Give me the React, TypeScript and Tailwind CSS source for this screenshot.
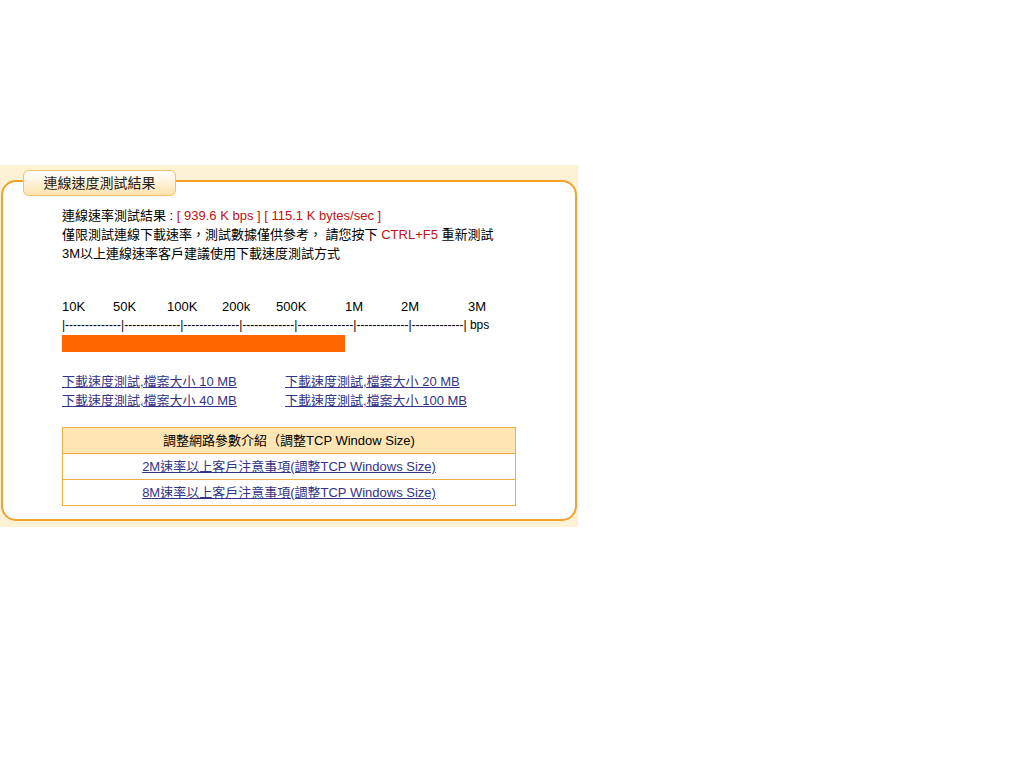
// Connection speed test result panel
const font = "font-['Liberation_Sans','Noto_Sans_CJK_TC',sans-serif]";

const labels = [
  { t: '10K', w: 'w-[51px]' },
  { t: '50K', w: 'w-[54px]' },
  { t: '100K', w: 'w-[55px]' },
  { t: '200k', w: 'w-[54px]' },
  { t: '500K', w: 'w-[69px]' },
  { t: '1M', w: 'w-[56px]' },
  { t: '2M', w: 'w-[67px]' },
  { t: '3M', w: '' },
];

// dash counts per segment of the scale line
const ticks = [14, 14, 14, 13, 14, 13, 13];

const links = [
  '下載速度測試,檔案大小 10 MB',
  '下載速度測試,檔案大小 20 MB',
  '下載速度測試,檔案大小 40 MB',
  '下載速度測試,檔案大小 100 MB',
];

export default function App() {
  return (
    <div className={`min-h-[768px] bg-white pt-[165px] ${font} text-[13px] text-black`}>
      <div className="w-[578px] bg-[#fdf2d4] pb-[6px] pt-[5px]">
        <div className="relative pt-[10px]">
          {/* title tab sits over the box border */}
          <div className="absolute left-[23px] top-0 z-10 flex h-[26px] w-[153px] items-center justify-center rounded-[6px] border border-[#f2bd6c] bg-gradient-to-b from-white to-[#fde3ac] text-[14px] text-[#222]">
            連線速度測試結果
          </div>
          <div className="ml-[1px] w-[576px] rounded-[15px] border-2 border-[#f3a22e] bg-white pb-[13px] pl-[59px] pt-[24px] leading-[19px]">
            <div>
              連線速率測試結果 : <span className="text-[#c41010]">[ 939.6 K bps ] [ 115.1 K bytes/sec ]</span>
            </div>
            <div>
              僅限測試連線下載速率，測試數據僅供參考， 請您按下 <span className="text-[#c41010]">CTRL+F5</span> 重新測試
            </div>
            <div>3M以上連線速率客戶建議使用下載速度測試方式</div>

            <div className="mt-[34px] flex">
              {labels.map((l) => (
                <span key={l.t} className={`${l.w} shrink-0`}>
                  {l.t}
                </span>
              ))}
            </div>
            <div className="flex whitespace-nowrap text-[12px]">
              {ticks.map((n, i) => (
                <span key={i}>{'|' + '-'.repeat(n)}</span>
              ))}
              <span>| bps</span>
            </div>
            <div className="h-[17px] w-[283px] bg-[#ff6600]" />

            <div className="mt-[20px] grid w-[420px] grid-cols-[223px_1fr]">
              {links.map((t) => (
                <a key={t} href="#" className="w-fit text-[#333388] underline">
                  {t}
                </a>
              ))}
            </div>

            <table className="mt-[17px] w-[454px] border-collapse text-center">
              <tbody>
                <tr>
                  <td className="h-[26px] border border-[#e8b040] bg-[#fde6b4] p-0">
                    調整網路參數介紹（調整TCP Window Size)
                  </td>
                </tr>
                <tr>
                  <td className="h-[26px] border border-[#e8b040] p-0">
                    <a href="#" className="text-[#333388] underline">
                      2M速率以上客戶注意事項(調整TCP Windows Size)
                    </a>
                  </td>
                </tr>
                <tr>
                  <td className="h-[26px] border border-[#e8b040] p-0">
                    <a href="#" className="text-[#333388] underline">
                      8M速率以上客戶注意事項(調整TCP Windows Size)
                    </a>
                  </td>
                </tr>
              </tbody>
            </table>
          </div>
        </div>
      </div>
    </div>
  );
}
